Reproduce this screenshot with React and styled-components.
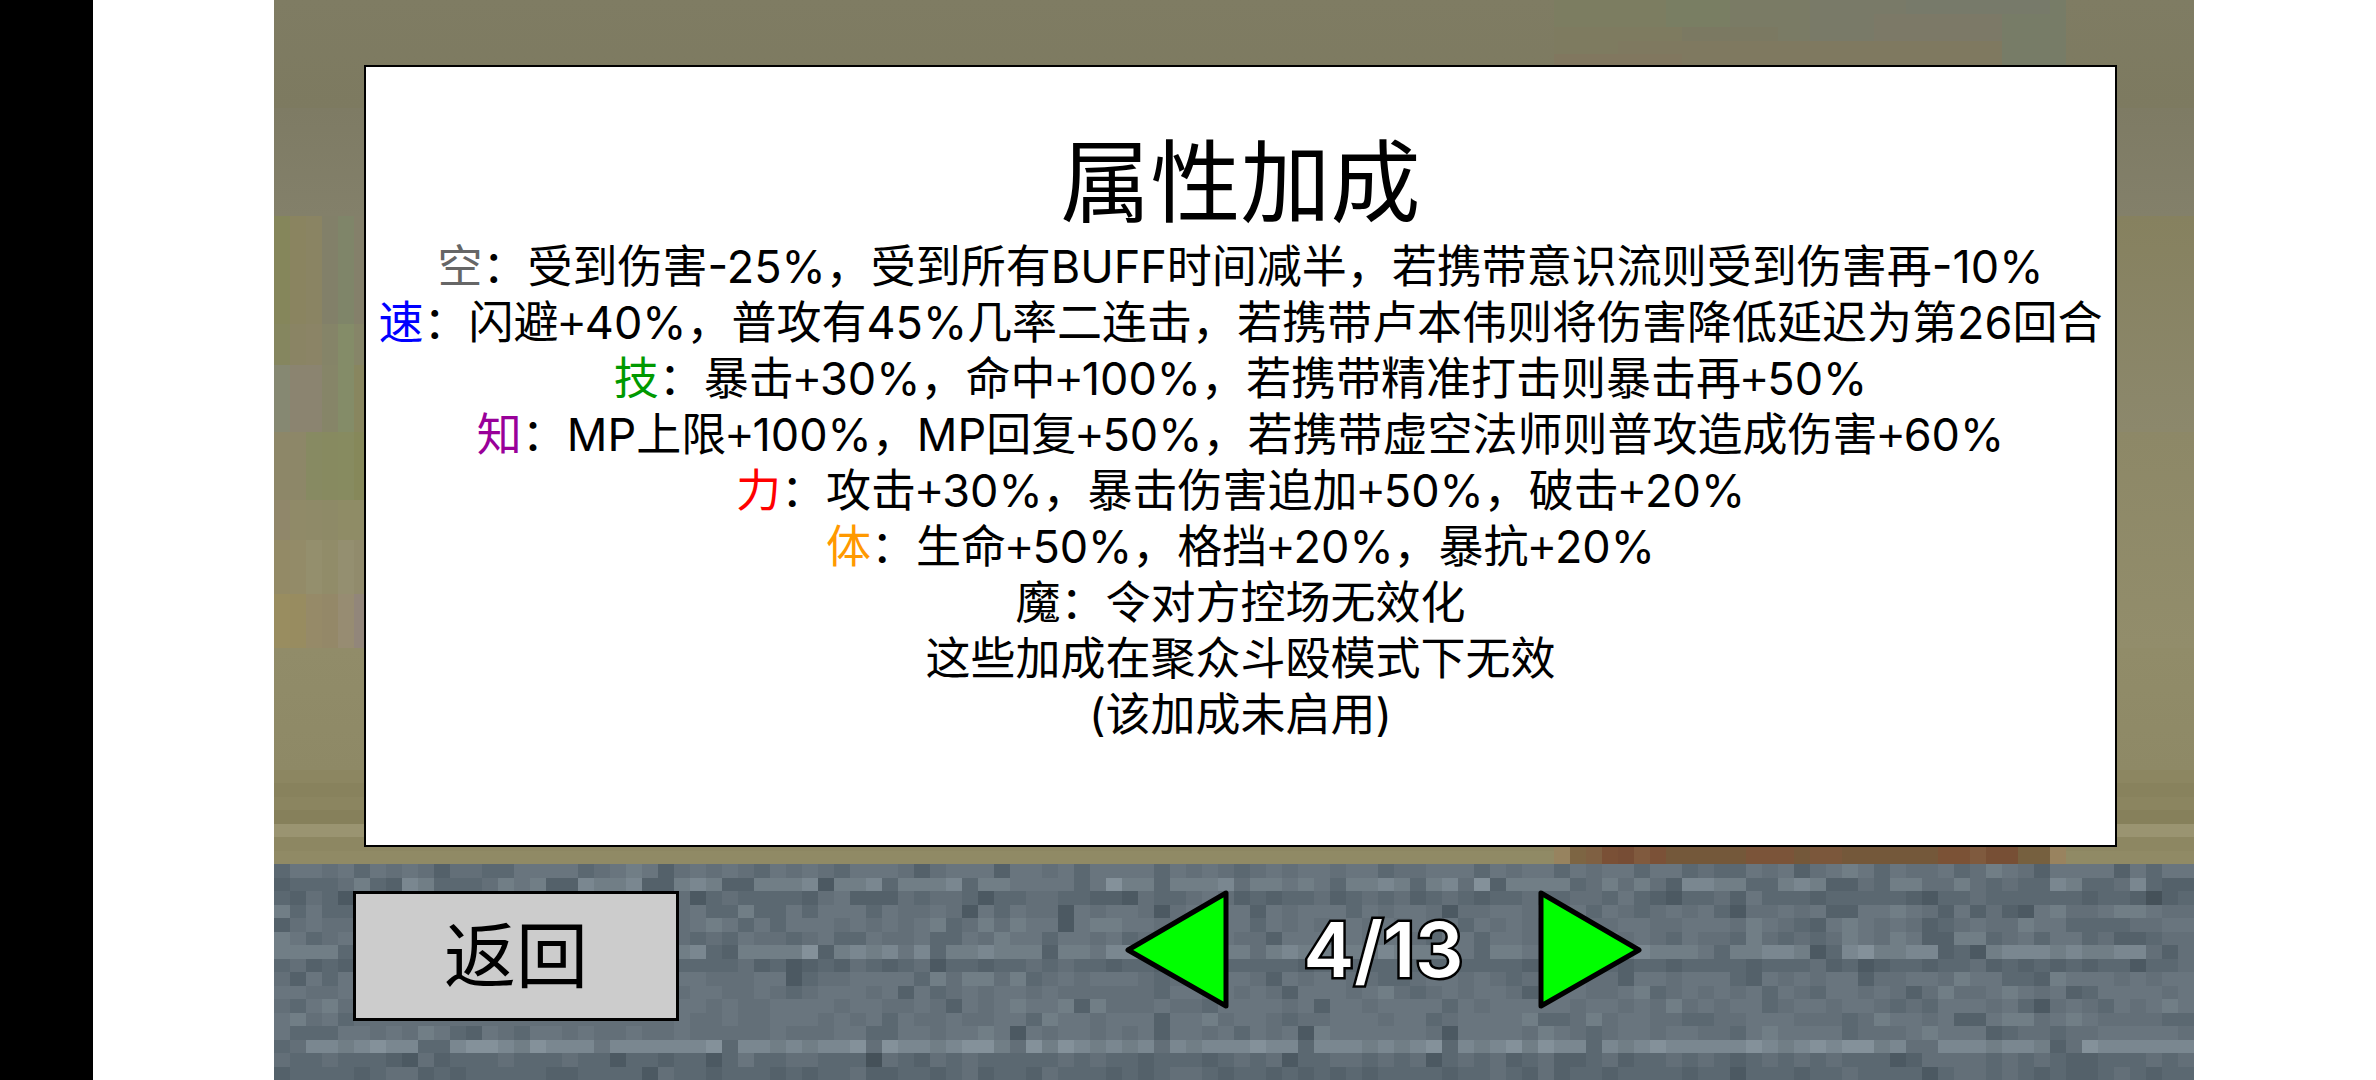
import React, { useState } from "react";
import styled, { createGlobalStyle } from "styled-components";

const GlobalStyle = createGlobalStyle`
  * { box-sizing: border-box; }
  html, body { margin: 0; background: #fff; }
  body {
    color: #000;
    font-family: Inter, "Noto Sans CJK SC", sans-serif;
    font-weight: 400;
  }
  button { font: inherit; color: inherit; cursor: pointer; }
`;

const Page = styled.div`
  display: flex;
  height: 100vh;
  overflow: hidden;
`;

const Notch = styled.div`
  flex: none;
  width: 93px;
  background: #000;
`;

const Viewport = styled.main`
  flex: 1;
  display: flex;
  justify-content: center;
  padding-right: 1px;
`;

const Stage = styled.section`
  flex: none;
  display: grid;
  height: 100%;
  aspect-ratio: 16 / 9;
`;

const Scenery = styled.svg`
  grid-area: 1 / 1;
  display: block;
  width: 100%;
  height: 100%;
`;

const Screen = styled.div`
  grid-area: 1 / 1;
  display: grid;
  grid-template-rows: 4fr 1fr;
  min-height: 0;
`;

const PanelArea = styled.div`
  display: flex;
  padding: 65px 77px 17px 90px;
`;

const Panel = styled.article`
  flex: 1;
  padding-top: 60px;
  border: 2px solid #000;
  background: #fff;
  text-align: center;
  white-space: nowrap;
`;

const Title = styled.h1`
  margin: 0;
  font-size: 90px;
  font-weight: 400;
  line-height: 112px;
`;

const Lines = styled.ul`
  margin: 0;
  padding: 0;
  list-style: none;
  font-size: 45px;
  line-height: 56px;
`;

const Tag = styled.span`
  color: ${(p) => p.$tone};
`;

const Plus = styled.span`
  font-family: "Liberation Sans", sans-serif;
  line-height: 1;
`;

const Bar = styled.nav`
  display: flex;
  align-items: flex-start;
  padding: 25px 79px 0;
`;

const BackButton = styled.button`
  width: 326px;
  height: 130px;
  margin-top: 2px;
  padding: 0;
  border: 3px solid #000;
  background: #ccc;
  font-size: 72px;
  line-height: 112px;
`;

const Pager = styled.div`
  display: flex;
  align-items: center;
  margin-left: 446px;
`;

const ArrowButton = styled.button`
  width: 104px;
  height: 120px;
  padding: 0;
  border: 0;
  background: none;

  svg { display: block; }
`;

const PageCount = styled.output`
  width: 309px;
  color: #fff;
  font-size: 76px;
  font-weight: 600;
  line-height: 112px;
  text-align: center;
  -webkit-text-stroke: 5px #000;
  paint-order: stroke fill;
`;

const STONE_SHADES = [
  "#455159", "#4c5962", "#54616a", "#5b6871", "#636f78",
  "#69757e", "#717e86", "#7a8790", "#84919a",
];

const STONE_ROWS = [
  "355453545424433555534565245454354543555424555255453555535454345455455344555354553545535534335452456535445346542555525355",
  "233346327633346562276672267622666716673666736655553586636667466565366763674826666346464277663367622436644643433763347322",
  "324314443445443444534443341343333245222434431334433221433454232334234342343233433443532133425333233333213343333332332023",
  "635334444444444444444444445336335355535445415354415455414555525455535455414455454535434545314454522556542524215644566544",
  "245444444444444444444444445653535554545456346465515665544555535454554545453545445444554455546543256545423454465533334455",
  "653454444444444444444444443435443453354453354655355453444555442555454554355355445545454354436434346546522663453553422344",
  "666634444444444444444444467326666826767573667666266577656666646766665766665366555655676665366776137866772316777676677424",
  "342324444444444444444444433334231232432341332334343323323333333323433333333333233433233233332333423123323342323232331334",
  "425354444444444444444444455444551344555536466463454555434555542545544334554543454544255455532545455244554655332655545455",
  "554454444444444444444444445544543455545253454554544444435545454255545643454554245544563454545354355454246445654523555545",
  "435644444444444444444444455454455554554454254565562644454435555452554555535455555455454645455345545543435554531454354565",
  "564534444444444444444444454454455545453544544553655455525564554344555455345555633464554433445554443465545225664565444433",
  "533355454653254355454454454444454445533554556515455454525545354516555555415555465434554554435655553444565552344344555554",
  "347767877337887687775777777837767677848776788648687676747677787737776767837678687737678777778767878867447776776248777777",
  "433433321423334333433133233135334433304324343333343433233323434133443434134342342234233434323434343331244443434322333434",
  "233332344232333332233331433233323233422332342332433323234432332323232333323343242332333323313332334333313443432322343233222",
];

const SKY = [
  [0, 8, "#7f7c63", "#7d7a60"],
  [8, 16, "#7e7b64", "#83806a"],
  [16, 32, "#86815f", "#8c886c"],
  [32, 48, "#8d8867", "#928d6b"],
  [48, 57, "#918c69", "#8e8966"],
  [57, 58, "#8c8661", "#8c8661"],
  [58, 59, "#88825d", "#88825d"],
  [59, 60, "#8b8560", "#8b8560"],
  [60, 61, "#86805b", "#86805b"],
  [61, 62, "#9a9471", "#9a9471"],
  [62, 63, "#8d8762", "#8d8762"],
  [63, 64, "#908a65", "#908a65"],
];

const FOLIAGE = [
  [16, 8, ["#85865b", "#8a8460", "#8a8463", "#828069", "#7f8569", "#84806a"]],
  [24, 3, ["#85865f", "#8a8464", "#8b8466", "#858468", "#848c68", "#868568"]],
  [27, 5, ["#868872", "#8b8470", "#8b8470", "#868568", "#848c68", "#88865f"]],
  [32, 5, ["#8d8768", "#8d8768", "#878a62", "#878a60", "#878b60", "#86885a"]],
  [37, 3, ["#90876a", "#908a68", "#8f8a68", "#8e8a67", "#8f8c66", "#8f8c66"]],
  [40, 4, ["#938a66", "#938b68", "#948f6d", "#918c69", "#948f70", "#918b6c"]],
  [44, 4, ["#998d60", "#988c60", "#968a68", "#948868", "#978c72", "#92867a"]],
];

const HAZE = [
  [80, 0, 7, 3, "#7c7d61"], [87, 0, 9, 3, "#7a7b65"], [87, 0, 4, 2, "#797e63"],
  [96, 0, 12, 3, "#797a68"], [80, 2, 8, 2, "#7e7b60"], [88, 2, 6, 2, "#7b7962"],
  [100, 1, 8, 2, "#7c7967"], [108, 0, 4, 5, "#777c67"], [84, 3, 10, 2, "#7f7960"],
  [94, 3, 14, 2, "#7f7960"], [80, 4, 8, 1, "#81775f"], [102, 0, 9, 1, "#777a6a"],
];

const EMBERS = [
  "#97835f", "#7d6543", "#7f6042", "#7a5036", "#774d35", "#805a3e", "#7b5137",
  "#74583a", "#74583a", "#74583a", "#74583a", "#74583a", "#7b5439", "#7b5439",
  "#7b5439", "#74583a", "#7b573b", "#7b573b", "#74583a", "#74583a", "#74583a",
  "#74583a", "#74583a", "#74583a", "#7b5236", "#7b5236", "#7f5a3e", "#774f35",
  "#774f35", "#76603f", "#76603f", "#99835f",
];

function Background() {
  return (
    <Scenery viewBox="0 0 120 80" preserveAspectRatio="none" shapeRendering="crispEdges" aria-hidden="true">
      <defs>
        {SKY.map(([from, , a, b]) => (
          <linearGradient key={from} id={`sky${from}`} x1="0" y1="0" x2="0" y2="1">
            <stop offset="0" stopColor={a} />
            <stop offset="1" stopColor={b} />
          </linearGradient>
        ))}
      </defs>
      {SKY.map(([from, to]) => (
        <rect key={from} x="0" y={from} width="120" height={to - from} fill={`url(#sky${from})`} />
      ))}
      {FOLIAGE.map(([y, h, colors]) =>
        colors.map((fill, x) => <rect key={`${y}-${x}`} x={x} y={y} width="1" height={h} fill={fill} />)
      )}
      {HAZE.map(([x, y, w, h, fill], i) => (
        <rect key={i} x={x} y={y} width={w} height={h} fill={fill} />
      ))}
      {EMBERS.map((fill, i) => (
        <rect key={i} x={80 + i} y="62" width="1" height="2" fill={fill} />
      ))}
      {STONE_ROWS.map((row, y) =>
        Array.from({ length: 120 }, (_, x) => (
          <rect
            key={`${y}-${x}`}
            x={x}
            y={64 + y}
            width="1"
            height="1"
            fill={STONE_SHADES[Number(row[x])] || STONE_SHADES[4]}
          />
        ))
      )}
    </Scenery>
  );
}

const BONUSES = [
  { tag: "空", tone: "#666", text: "：受到伤害-25%，受到所有BUFF时间减半，若携带意识流则受到伤害再-10%" },
  { tag: "速", tone: "#00f", text: "：闪避+40%，普攻有45%几率二连击，若携带卢本伟则将伤害降低延迟为第26回合" },
  { tag: "技", tone: "#090", text: "：暴击+30%，命中+100%，若携带精准打击则暴击再+50%" },
  { tag: "知", tone: "#909", text: "：MP上限+100%，MP回复+50%，若携带虚空法师则普攻造成伤害+60%" },
  { tag: "力", tone: "#f00", text: "：攻击+30%，暴击伤害追加+50%，破击+20%" },
  { tag: "体", tone: "#f90", text: "：生命+50%，格挡+20%，暴抗+20%" },
  { tag: "魔", tone: "#000", text: "：令对方控场无效化" },
  { tag: "", tone: "#000", text: "这些加成在聚众斗殴模式下无效" },
  { tag: "", tone: "#000", text: "(该加成未启用)" },
];

const PAGES = 13;

function BonusText({ text }) {
  return text.split("+").map((part, i) => (
    <React.Fragment key={i}>
      {i > 0 && <Plus>+</Plus>}
      {part}
    </React.Fragment>
  ));
}

function Arrow({ points, label, onClick }) {
  return (
    <ArrowButton type="button" aria-label={label} onClick={onClick}>
      <svg width="104" height="120" viewBox="0 0 104 120" aria-hidden="true">
        <polygon points={points} fill="#0f0" stroke="#000" strokeWidth="5" strokeLinejoin="round" />
      </svg>
    </ArrowButton>
  );
}

export default function App() {
  const [page, setPage] = useState(4);
  return (
    <>
      <GlobalStyle />
      <Page>
        <Notch />
        <Viewport>
          <Stage>
            <Background />
            <Screen>
              <PanelArea>
                <Panel>
                  <Title>属性加成</Title>
                  <Lines>
                    {BONUSES.map(({ tag, tone, text }) => (
                      <li key={text}>
                        {tag && <Tag $tone={tone}>{tag}</Tag>}
                        <BonusText text={text} />
                      </li>
                    ))}
                  </Lines>
                </Panel>
              </PanelArea>
              <Bar>
                <BackButton type="button">返回</BackButton>
                <Pager>
                  <Arrow label="上一页" points="3,61 101,4 101,117" onClick={() => setPage(Math.max(1, page - 1))} />
                  <PageCount>{page}/{PAGES}</PageCount>
                  <Arrow label="下一页" points="101,61 3,4 3,117" onClick={() => setPage(Math.min(PAGES, page + 1))} />
                </Pager>
              </Bar>
            </Screen>
          </Stage>
        </Viewport>
      </Page>
    </>
  );
}
